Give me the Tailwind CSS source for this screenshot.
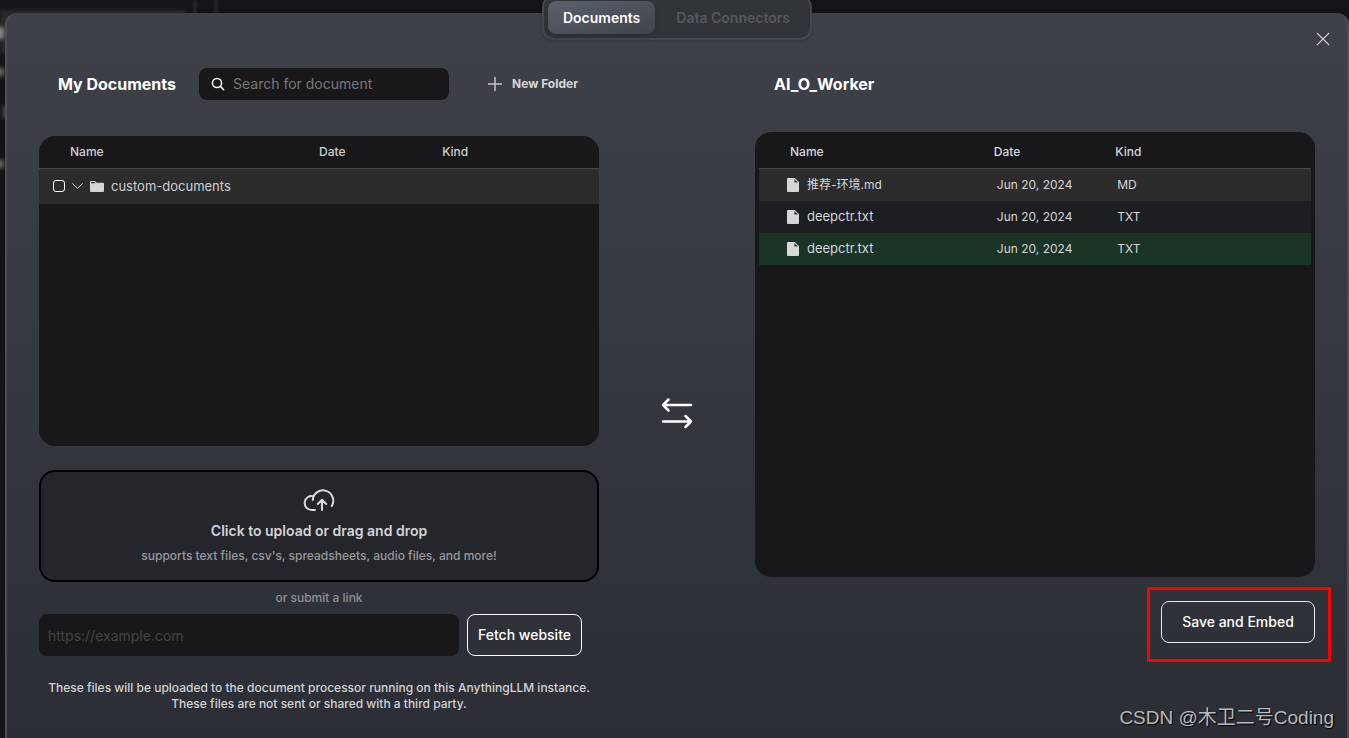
<!DOCTYPE html>
<html lang="en">
<head>
<meta charset="utf-8">
<title>Documents</title>
<script src="https://cdn.jsdelivr.net/npm/@tailwindcss/browser@4"></script>
</head>
<body class="relative min-h-screen overflow-hidden bg-[#131417] font-['Inter','Noto_Sans_CJK_SC',sans-serif] text-white">

<!-- dimmed page behind the dialog -->
<div aria-hidden="true" class="absolute inset-0 overflow-hidden">
  <div class="absolute left-0 top-[10px] h-[43px] w-[186px] bg-[#2b2c30] blur-[2px]"></div>
  <div class="absolute left-[193px] top-0 h-4 w-1 bg-[#25262a] blur-[1px]"></div>
  <div class="absolute left-[214px] top-0 h-4 w-1 bg-[#25262a] blur-[1px]"></div>
  <div class="absolute -left-1 top-[27px] h-3 w-2 bg-[#8a8b8d] blur-[2px]"></div>
  <div class="absolute -left-1 top-[68px] h-2 w-2 bg-[#6a6b6d] blur-[2px]"></div>
  <div class="absolute left-[3px] top-[106px] h-3 w-2 bg-[#4a4b4d] blur-[2px]"></div>
  <div class="absolute -left-1 top-[160px] h-2 w-2 bg-[#6a6b6d] blur-[2px]"></div>
</div>

<main class="relative pl-[5px] pt-[13px]">
  <div class="relative min-h-[calc(100vh-13px)] rounded-t-xl border-x-2 border-[#4b4e55] bg-linear-to-b from-[#3f4149] to-[#2c2e35] px-8 pt-[51px]">

    <nav class="absolute -top-[18px] left-1/2 flex -translate-x-1/2 gap-[5px] rounded-xl border-2 border-[#44474b] bg-[#313438] p-1 text-sm font-semibold shadow-sm">
      <button class="h-[33px] rounded-lg bg-linear-to-br from-[#5b616c] to-[#3f434c] px-[15px] shadow-md">Documents</button>
      <button class="h-[33px] px-4 text-[#54575c]">Data Connectors</button>
    </nav>

    <button aria-label="Close" class="absolute right-[17px] top-[19px]">
      <svg class="size-[14px]" viewBox="0 0 14 14" fill="none" stroke="#d8dadd" stroke-width="1.2" stroke-linecap="round"><path d="M1.3 1.3 12.7 12.7M12.7 1.3 1.3 12.7"/></svg>
    </button>

    <div class="grid grid-cols-[560fr_156fr_560fr]">
      <!-- left column -->
      <section>
        <div class="flex h-10 items-center pl-[19px]">
          <h1 class="w-[141px] text-base font-bold">My Documents</h1>
          <label class="flex h-8 w-[250px] items-center gap-2 rounded-lg bg-[#18181a] pl-3">
            <svg class="size-[14px] shrink-0" viewBox="0 0 14 14" fill="none" stroke="#fff" stroke-width="1.5" stroke-linecap="round"><circle cx="6" cy="6" r="4.6"/><path d="m9.4 9.4 3.3 3.3"/></svg>
            <input type="search" aria-label="Search for document" placeholder="Search for document" class="w-full bg-transparent text-sm outline-none placeholder:text-[#77787a]">
          </label>
          <button class="ml-[39px] flex items-center gap-[10px] text-xs font-bold text-[#d5d6d8]">
            <svg class="size-[14px]" viewBox="0 0 14 14" stroke="#c4c5c8" stroke-width="1.5"><path d="M7 0v14M0 7h14"/></svg>
            New Folder
          </button>
        </div>

        <div class="mt-8 h-[310px] overflow-hidden rounded-2xl bg-[#18181a]">
          <table class="w-full table-fixed text-left text-xs text-[#cfcfd1]">
            <colgroup><col class="w-[50%]"><col class="w-[22%]"><col class="w-[28%]"></colgroup>
            <thead>
              <tr class="h-8 border-b border-[#46474a]">
                <th class="pl-[31px] font-medium">Name</th><th class="font-medium">Date</th><th class="font-medium">Kind</th>
              </tr>
            </thead>
            <tbody>
              <tr class="h-9 bg-[#2c2c2c]">
                <td colspan="3" class="pl-[14px]">
                  <div class="flex items-center">
                    <input type="checkbox" aria-label="Select custom-documents" class="size-3 appearance-none rounded-[3px] border border-white">
                    <svg class="ml-[7px] mr-[7px] h-[7px] w-[11px]" viewBox="0 0 11 7" fill="none" stroke="#cfcfd1" stroke-linecap="round" stroke-linejoin="round"><path d="M.6.6 5.5 5.4 10.4.6"/></svg>
                    <svg class="h-[11px] w-[14px]" viewBox="0 0 14 11" fill="#d6d6d6"><path fill-rule="evenodd" d="M.6 0h4.2l1.9 1.7h6.4c.5 0 .9.3.9.8v7.7c0 .5-.3.8-.8.8H.8c-.5 0-.8-.3-.8-.8V.7C0 .3.2 0 .6 0ZM1 1v1.2h4.6L4.4 1Z"/></svg>
                    <span class="ml-[7px] text-[13px]">custom-documents</span>
                  </div>
                </td>
              </tr>
            </tbody>
          </table>
        </div>

        <button class="mt-6 flex h-28 w-full flex-col items-center rounded-2xl border-2 border-black bg-[#25262b] pt-4">
          <svg class="h-6 w-8" viewBox="0 0 32 24" fill="none" stroke="#d8d9db" stroke-width="2" stroke-linecap="round" stroke-linejoin="round"><path d="M12 22H8.500A7 7 0 1 1 10.300 8.200"/><path d="M9.700 12A10.300 10.300 0 1 1 28.800 18"/><path d="M19 22V12M14.800 16 19 11.800 23.200 16"/></svg>
          <span class="mt-[7px] text-sm font-semibold leading-6 text-[#d3d4d5]">Click to upload or drag and drop</span>
          <span class="mt-[3px] text-xs font-medium leading-5 text-[#98999b]">supports text files, csv's, spreadsheets, audio files, and more!</span>
        </button>

        <p class="h-8 text-center text-xs font-medium leading-8 text-[#8f9093]">or submit a link</p>

        <form class="flex gap-2 pr-[17px]">
          <input type="url" aria-label="Website link" placeholder="https://example.com" class="h-[42px] min-w-0 flex-1 rounded-lg bg-[#18181a] px-[9px] text-sm outline-none placeholder:text-[#424346]">
          <button type="button" class="h-[42px] w-[115px] whitespace-nowrap rounded-lg border border-white text-sm font-medium">Fetch website</button>
        </form>

        <p class="mt-6 text-center text-xs font-medium text-[#d2d3d5]">These files will be uploaded to the document processor running on this AnythingLLM instance.<br>These files are not sent or shared with a third party.</p>
      </section>

      <!-- transfer arrows -->
      <div class="flex justify-center pt-[333px]">
        <svg class="h-8 w-8" viewBox="0 0 32 32" fill="none" stroke="#fff" stroke-width="2.500" stroke-linecap="round" stroke-linejoin="round"><path d="M30 8H2M7.500 2.500 2 8l5.500 5.500M2 24.500h28M24.500 19l5.500 5.500-5.500 5.500"/></svg>
      </div>

      <!-- right column -->
      <section>
        <h2 class="flex h-10 items-center pl-[19px] text-base font-bold">AI_O_Worker</h2>
        <div class="mt-7 h-[445px] rounded-2xl bg-[#18181a] px-1 pt-1">
          <table class="w-full table-fixed text-left text-xs text-[#d6d6d8]">
            <colgroup><col class="w-[42%]"><col class="w-[22%]"><col class="w-[36%]"></colgroup>
            <thead>
              <tr class="h-8 border-b border-[#46474a]">
                <th class="pl-[31px] font-medium">Name</th><th class="pl-[3px] font-medium">Date</th><th class="pl-[3px] font-medium">Kind</th>
              </tr>
            </thead>
            <tbody>
              <tr class="h-[33px] bg-[#2c2c2c]">
                <td class="pl-7"><div class="flex items-center gap-2"><svg class="h-[14px] w-3" viewBox="0 0 12 14" fill="#d6d6d6"><path fill-rule="evenodd" d="M1 0h6.800L12 4.200V13c0 .6-.4 1-1 1H1c-.6 0-1-.4-1-1V1c0-.6.4-1 1-1Zm6.500 1.200v3.300h3.300Z"/></svg>推荐-环境.md</div></td>
                <td class="pl-[6px]">Jun 20, 2024</td><td class="pl-[5px]">MD</td>
              </tr>
              <tr class="h-8 bg-[#1d1e22]">
                <td class="pl-7"><div class="flex items-center gap-2"><svg class="h-[14px] w-3" viewBox="0 0 12 14" fill="#d6d6d6"><path fill-rule="evenodd" d="M1 0h6.800L12 4.200V13c0 .6-.4 1-1 1H1c-.6 0-1-.4-1-1V1c0-.6.4-1 1-1Zm6.500 1.200v3.300h3.300Z"/></svg><span class="text-[13px]">deepctr.txt</span></div></td>
                <td class="pl-[6px]">Jun 20, 2024</td><td class="pl-[5px]">TXT</td>
              </tr>
              <tr class="h-8 bg-[#1a3426]">
                <td class="pl-7"><div class="flex items-center gap-2"><svg class="h-[14px] w-3" viewBox="0 0 12 14" fill="#d3d9d5"><path fill-rule="evenodd" d="M1 0h6.800L12 4.200V13c0 .6-.4 1-1 1H1c-.6 0-1-.4-1-1V1c0-.6.4-1 1-1Zm6.500 1.200v3.300h3.300Z"/></svg><span class="text-[13px]">deepctr.txt</span></div></td>
                <td class="pl-[6px]">Jun 20, 2024</td><td class="pl-[5px]">TXT</td>
              </tr>
            </tbody>
          </table>
        </div>
        <div class="mt-6 flex justify-end">
          <div class="relative">
            <button class="h-[42px] w-[154px] rounded-lg border border-[#e2e8f0] text-sm font-medium">Save and Embed</button>
            <div aria-hidden="true" class="pointer-events-none absolute -bottom-[19px] -left-[14px] -right-4 -top-[14px] border-3 border-[#ff0000]"></div>
          </div>
        </div>
      </section>
    </div>

    <p class="absolute bottom-1 right-[13px] whitespace-nowrap font-['Liberation_Sans','Noto_Sans_CJK_SC',sans-serif] text-[19px] leading-8 text-[#b9babc] [text-shadow:1px_1px_1px_#000]">CSDN @木卫二号Coding</p>
  </div>
</main>
</body>
</html>
